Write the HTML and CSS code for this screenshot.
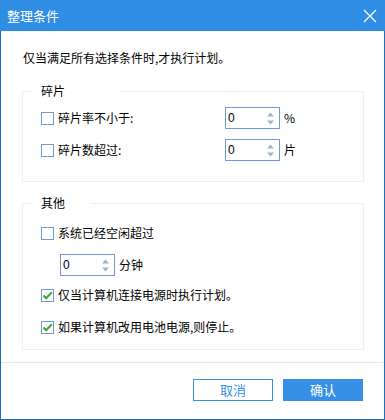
FILE: index.html
```html
<!DOCTYPE html>
<html>
<head>
<meta charset="utf-8">
<link rel="stylesheet" href="styles.css">
</head>
<body>
<div class="win">
  <div class="titlebar">
    <span class="title">整理条件</span>
    <svg class="close" width="14" height="14" viewBox="0 0 14 14"><path d="M1 1 L13 13 M13 1 L1 13" stroke="#fff" stroke-width="1.3" fill="none"/></svg>
  </div>
  <div class="content">
    <p class="intro">仅当满足所有选择条件时,才执行计划。</p>

    <fieldset class="group g1">
      <legend class="lg1">碎片</legend>
      <div class="row">
        <label class="chk lbl-wide"><span class="box"></span>碎片率不小于:</label>
        <span class="spin"><span class="val">0</span><svg class="arrows" width="7" height="13" viewBox="0 0 7 13"><path d="M0 4.5 L3.5 0.5 L7 4.5 Z M0 8.5 L3.5 12.5 L7 8.5 Z" fill="#9fb3cc"/></svg></span>
        <span class="unit">%</span>
      </div>
      <div class="row r2">
        <label class="chk lbl-wide"><span class="box"></span>碎片数超过:</label>
        <span class="spin"><span class="val">0</span><svg class="arrows" width="7" height="13" viewBox="0 0 7 13"><path d="M0 4.5 L3.5 0.5 L7 4.5 Z M0 8.5 L3.5 12.5 L7 8.5 Z" fill="#9fb3cc"/></svg></span>
        <span class="unit">片</span>
      </div>
    </fieldset>

    <fieldset class="group g2">
      <legend class="lg2">其他</legend>
      <div class="row">
        <label class="chk"><span class="box"></span>系统已经空闲超过</label>
      </div>
      <div class="row r-spin">
        <span class="spin"><span class="val">0</span><svg class="arrows" width="7" height="13" viewBox="0 0 7 13"><path d="M0 4.5 L3.5 0.5 L7 4.5 Z M0 8.5 L3.5 12.5 L7 8.5 Z" fill="#9fb3cc"/></svg></span>
        <span class="unit">分钟</span>
      </div>
      <div class="row r-c1">
        <label class="chk"><span class="box checked"><svg width="11" height="11" viewBox="0 0 11 11"><path d="M1.5 5.5 L4.2 8.3 L9.8 2.2" stroke="#3fa52c" stroke-width="2" fill="none"/></svg></span>仅当计算机连接电源时执行计划。</label>
      </div>
      <div class="row r-c2">
        <label class="chk"><span class="box checked"><svg width="11" height="11" viewBox="0 0 11 11"><path d="M1.5 5.5 L4.2 8.3 L9.8 2.2" stroke="#3fa52c" stroke-width="2" fill="none"/></svg></span>如果计算机改用电池电源,则停止。</label>
      </div>
    </fieldset>
  </div>
  <div class="footer">
    <button class="btn btn-cancel">取消</button>
    <button class="btn btn-ok">确认</button>
  </div>
</div>
</body>
</html>
```

FILE: styles.css
```css
* { box-sizing: border-box; }
html, body { margin: 0; padding: 0; background: #fff; }
body {
  font-family: "Noto Sans CJK SC", "Liberation Sans", sans-serif;
  font-size: 12px;
  color: #000;
}
.win {
  width: 385px;
  height: 420px;
  border: 1px solid #1b6fc1;
  border-top: none;
  display: flex;
  flex-direction: column;
  background: #fff;
}
.titlebar {
  height: 31px;
  margin: 0 -1px;
  background: #2f8de4;
  display: flex;
  align-items: center;
  justify-content: space-between;
  padding: 0 8px 0 7px;
  color: #fff;
}
.title { font-size: 13px; line-height: 16px; }
.close { display: block; }
.content {
  padding: 0 20px 0 21px;
}
.intro {
  margin: 19px 0 0 1px;
  line-height: 16px;
}
.group {
  margin: 19px 0 0 0;
  width: 342px;
  border: 1px solid #eceff3;
  padding: 10px 0 20px 10px;
  min-width: 0;
}
.group legend {
  padding: 0 0 0 8px;
  line-height: 12px;
  font-size: 12px;
}
.lg1 { width: 88px; }
.lg2 { width: 58px; }
.g2 {
  margin-top: 15px;
  padding-top: 13px;
  padding-bottom: 11px;
}
.row {
  height: 22px;
  display: flex;
  align-items: center;
  padding-left: 8px;
}
.r2 { margin-top: 10px; }
.r-spin { margin-top: 10px; padding-left: 27px; }
.r-c1 { margin-top: 8px; }
.r-c2 { margin-top: 10px; }
.chk {
  display: flex;
  align-items: center;
  line-height: 16px;
}
.lbl-wide { width: 184px; }
.box {
  width: 13px;
  height: 13px;
  border: 1px solid #6d9ad6;
  margin-right: 4px;
  display: flex;
  align-items: center;
  justify-content: center;
  background: #fff;
}
.box svg { display: block; }
.spin {
  width: 55px;
  height: 22px;
  border: 1px solid #6e98d6;
  display: flex;
  align-items: center;
  justify-content: space-between;
  padding: 0 5px 0 2px;
  font-family: "Liberation Sans", sans-serif;
  font-size: 12px;
}
.arrows { display: block; }
.unit { margin-left: 4px; line-height: 16px; }
.footer {
  margin-top: 12px;
  border-top: 1px solid #e2e7ed;
  padding: 16px 21px 0 0;
  display: flex;
  justify-content: flex-end;
  gap: 10px;
}
.btn {
  width: 80px;
  height: 22px;
  font-family: "Noto Sans CJK SC", sans-serif;
  font-size: 13px;
  line-height: 16px;
  padding: 0;
  border: 1px solid #3590e6;
  border-radius: 0;
}
.btn-cancel { background: #fff; color: #3590e6; }
.btn-ok { background: #3590e6; color: #fff; }
```
